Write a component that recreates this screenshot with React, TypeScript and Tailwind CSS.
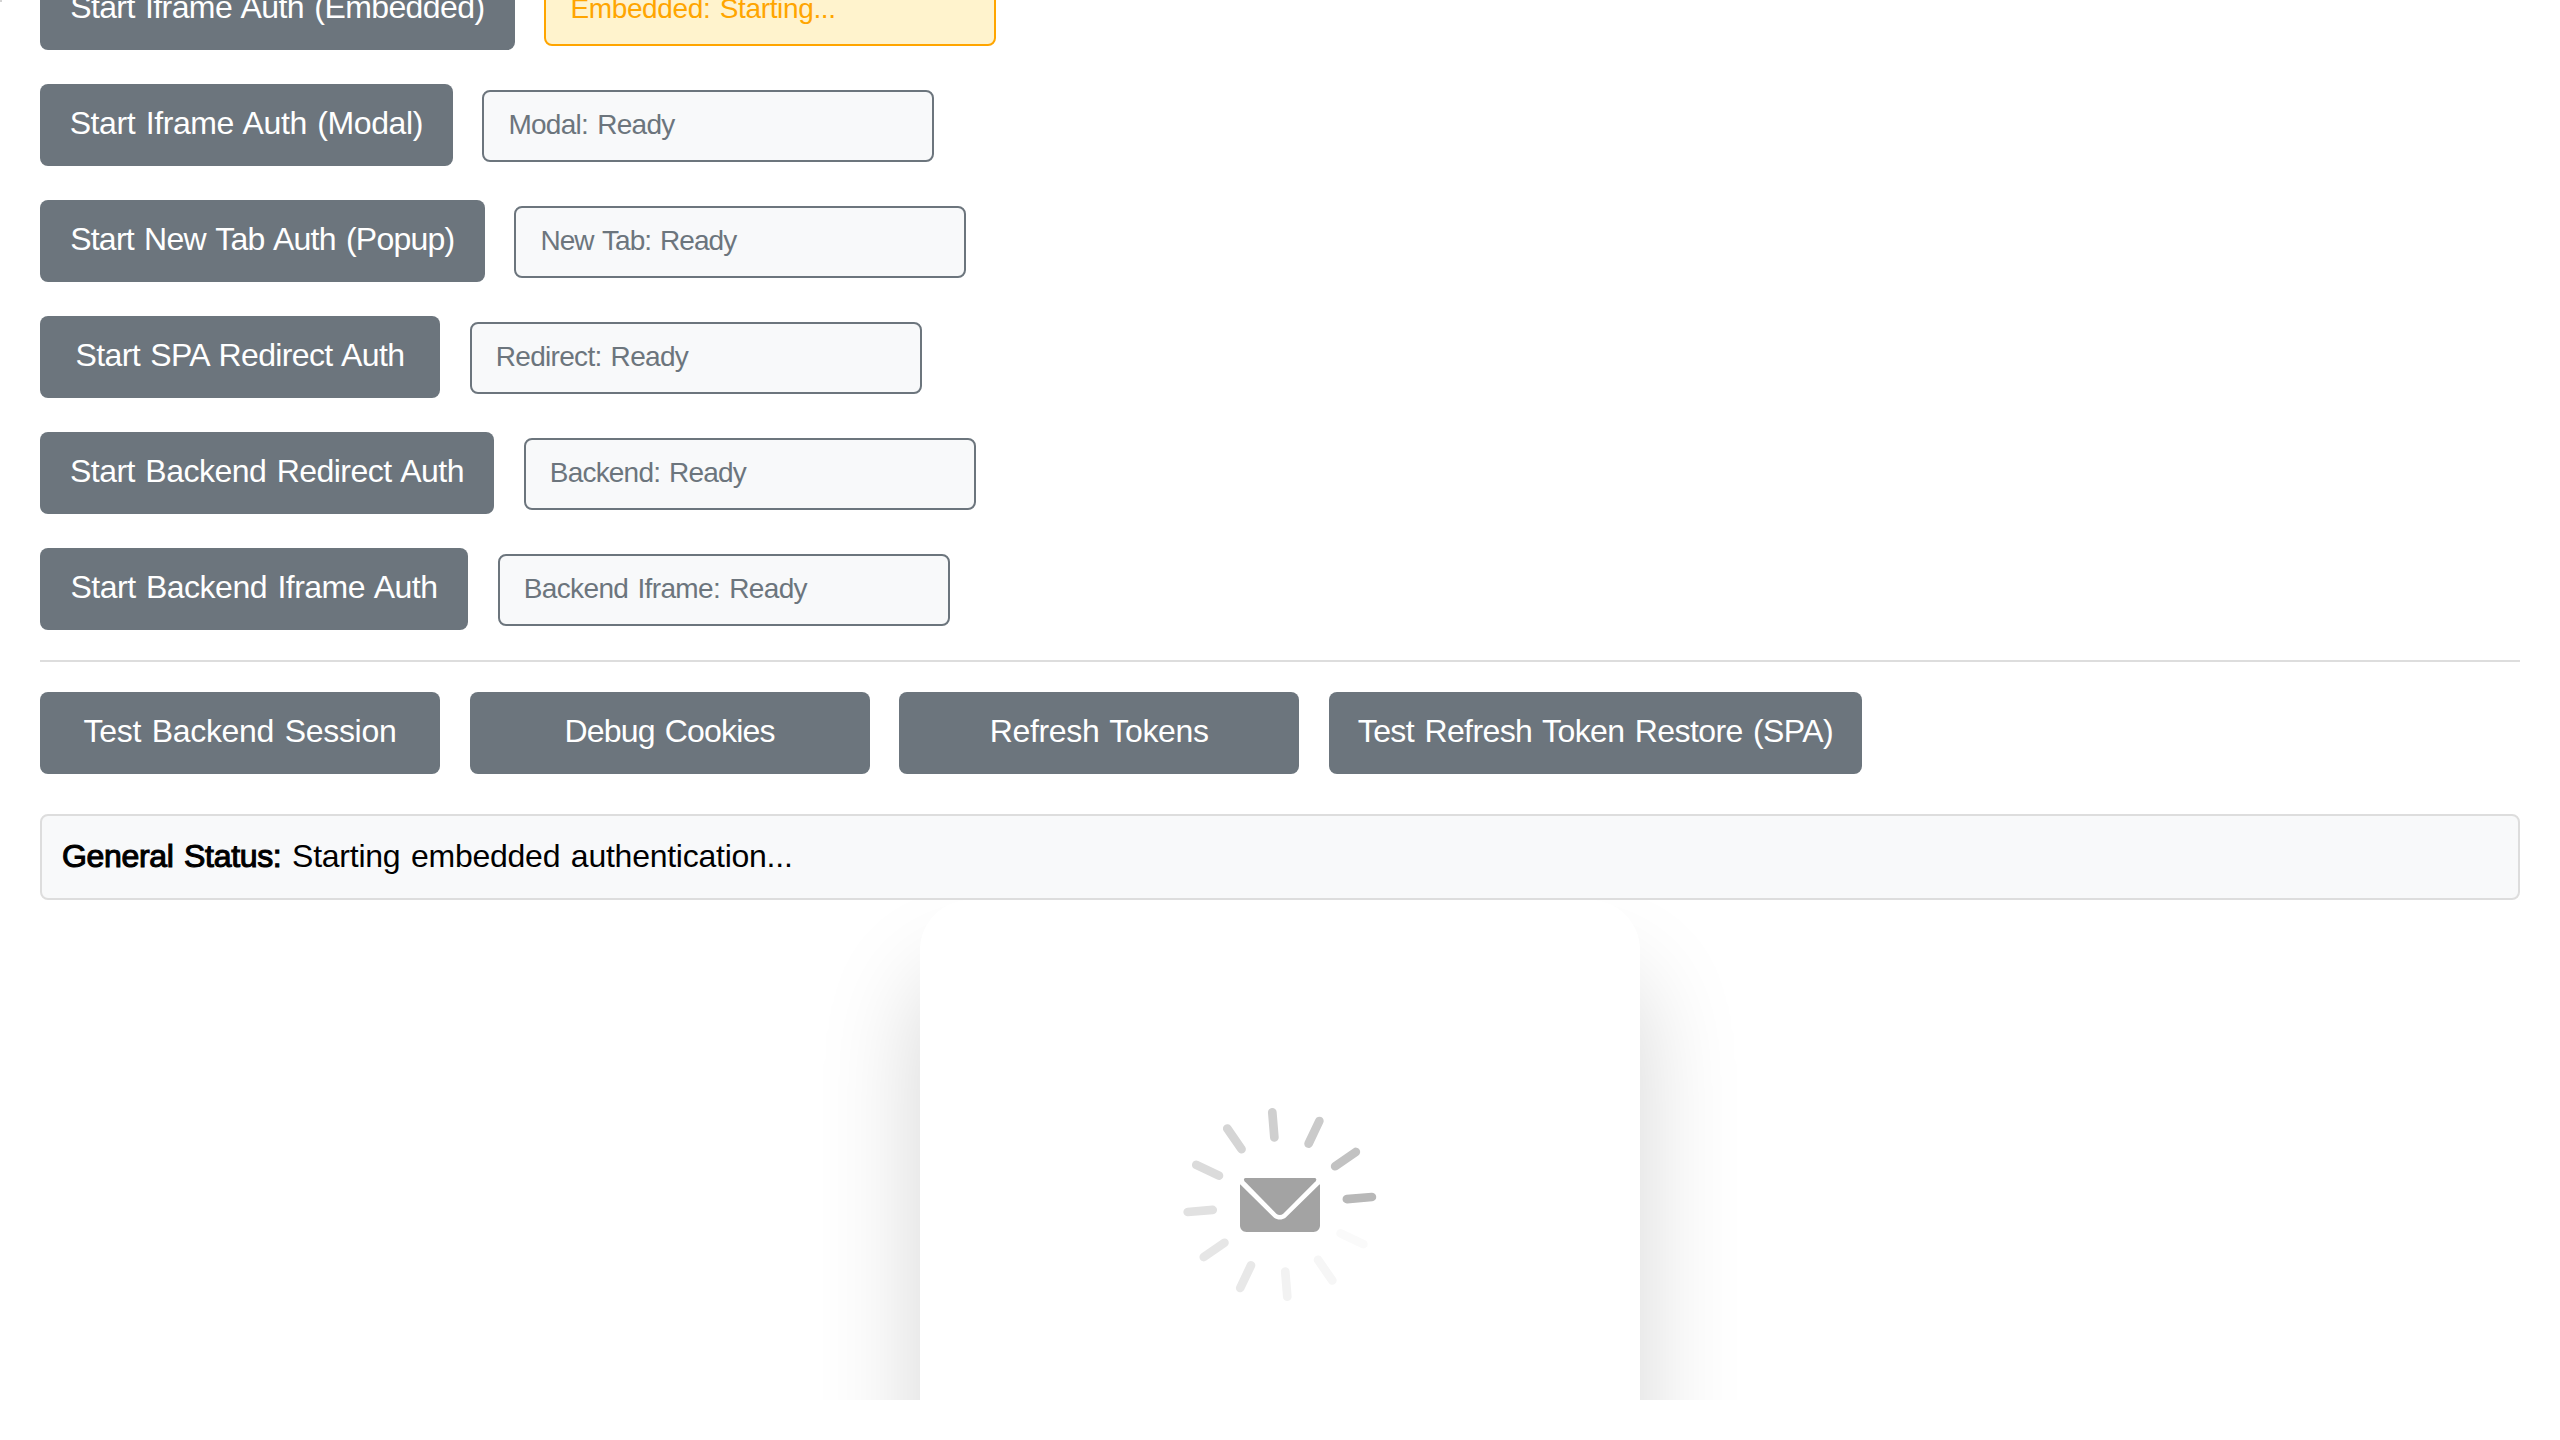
const FONT = 'font-["Liberation_Sans",Arial,sans-serif]';

type Row = { label: string; labelClass: string; status: string; statusClass: string; starting?: boolean };

const rows: Row[] = [
  { label: 'Start Iframe Auth (Embedded)', labelClass: 'w-[474.6px] tracking-[-0.6px]', status: 'Embedded: Starting...', statusClass: 'tracking-[-0.36px]', starting: true },
  { label: 'Start Iframe Auth (Modal)', labelClass: 'w-[412.6px] tracking-[-0.41px]', status: 'Modal: Ready', statusClass: 'tracking-[-0.71px]' },
  { label: 'Start New Tab Auth (Popup)', labelClass: 'w-[444.6px] tracking-[-0.76px]', status: 'New Tab: Ready', statusClass: 'tracking-[-0.93px]' },
  { label: 'Start SPA Redirect Auth', labelClass: 'w-[400px] tracking-[-0.63px]', status: 'Redirect: Ready', statusClass: 'tracking-[-0.7px]' },
  { label: 'Start Backend Redirect Auth', labelClass: 'w-[454px] tracking-[-0.52px]', status: 'Backend: Ready', statusClass: 'tracking-[-0.8px]' },
  { label: 'Start Backend Iframe Auth', labelClass: 'w-[428px] tracking-[-0.5px]', status: 'Backend Iframe: Ready', statusClass: 'tracking-[-0.64px]' },
];

const tools = [
  { label: 'Test Backend Session', cls: 'w-[400px] tracking-[-0.3px]' },
  { label: 'Debug Cookies', cls: 'w-[400px] tracking-[-0.8px]' },
  { label: 'Refresh Tokens', cls: 'w-[400px] tracking-[-0.35px]' },
  { label: 'Test Refresh Token Restore (SPA)', cls: 'w-[533.2px] tracking-[-0.59px]' },
];

const rays = ['#b8b8b8', '#c2c2c2', '#cacaca', '#cfcfcf', '#d5d5d5', '#dbdbdb', '#e1e1e1', '#e6e6e6', '#e8e8e8', '#f2f2f2', '#f6f6f6', '#fafafa'];

function ActionButton({ label, cls }: { label: string; cls: string }) {
  return (
    <button className={`h-[82px] shrink-0 rounded-lg bg-[#6c757d] pb-1 text-center text-[32px] leading-9 whitespace-nowrap text-white [word-spacing:2px] ${cls}`}>
      {label}
    </button>
  );
}

function StatusBox({ row }: { row: Row }) {
  const tone = row.starting ? 'border-[#ffa500] bg-[#fff3cd] text-[#ffa500]' : 'border-[#6c757d] bg-[#f8f9fa] text-[#6c757d]';
  return (
    <div className={`mt-0.5 flex h-[72px] w-[452px] shrink-0 items-center rounded-lg border-2 px-6 pb-0.5 text-[28px] leading-8 whitespace-nowrap [word-spacing:2px] ${tone} ${row.statusClass}`}>
      {row.status}
    </div>
  );
}

function MailSpinner() {
  return (
    <svg width="200" height="200" viewBox="-99.8 -100.5 200 200" className="shrink-0">
      {rays.map((color, i) => (
        <line key={color} x1="67.3" y1="0" x2="92.4" y2="0" stroke={color} strokeWidth="8.7" strokeLinecap="round" transform={`rotate(${-4.65 - 30 * i})`} />
      ))}
      <path
        fill="#a3a3a3"
        d="M-34.3 -26.5H35C36.6 -26.5 37 -24.5 35.8 -23.2L3.4 9.2C1.4 11 -1.4 11 -3.4 9.2L-35.2 -23.2C-36.4 -24.5 -36 -26.5 -34.3 -26.5Z"
      />
      <path
        fill="#a3a3a3"
        d="M-39.8 -20.2L-38.9 -19.6L-5.7 13.2C-2.5 15.6 2.5 15.6 5.7 13.2L39.1 -19.6L40.2 -20.2V21C40.2 24.6 37.3 27.5 33.7 27.5H-33.3C-36.9 27.5 -39.8 24.6 -39.8 21Z"
      />
    </svg>
  );
}

export default function App() {
  return (
    <div className={`relative h-[1440px] w-full overflow-hidden bg-white text-black ${FONT}`}>
      <div className="absolute top-0 left-0 size-0.5 bg-[#d3d3d3]" />
      <main className="-mt-8 flex flex-col px-10">
        <section className="flex flex-col gap-[34px]">
          {rows.map((row) => (
            <div key={row.label} className="flex items-center gap-[29.8px]">
              <ActionButton label={row.label} cls={row.labelClass} />
              <StatusBox row={row} />
            </div>
          ))}
        </section>
        <hr className="mt-[30px] h-0.5 border-0 bg-[#ddd]" />
        <section className="mt-[30px] flex gap-[29.6px]">
          {tools.map((t) => (
            <ActionButton key={t.label} label={t.label} cls={t.cls} />
          ))}
        </section>
        <div className="mt-10 flex h-[86px] items-center rounded-lg border-2 border-[#ddd] bg-[#f8f9fa] px-5 pb-0.5 text-[32px] leading-9 whitespace-pre [word-spacing:2px]">
          <span className="tracking-[-0.33px] [-webkit-text-stroke:1.1px_black]">General Status:</span>
          <span className="tracking-[-0.25px]"> Starting embedded authentication...</span>
        </div>
      </main>
      <div className="flex h-[500px] justify-center overflow-hidden">
        <div className="flex h-[608px] w-[720px] shrink-0 items-center justify-center rounded-[50px] bg-white shadow-[0_76px_100px_rgba(0,0,0,0.17)]">
          <MailSpinner />
        </div>
      </div>
    </div>
  );
}
